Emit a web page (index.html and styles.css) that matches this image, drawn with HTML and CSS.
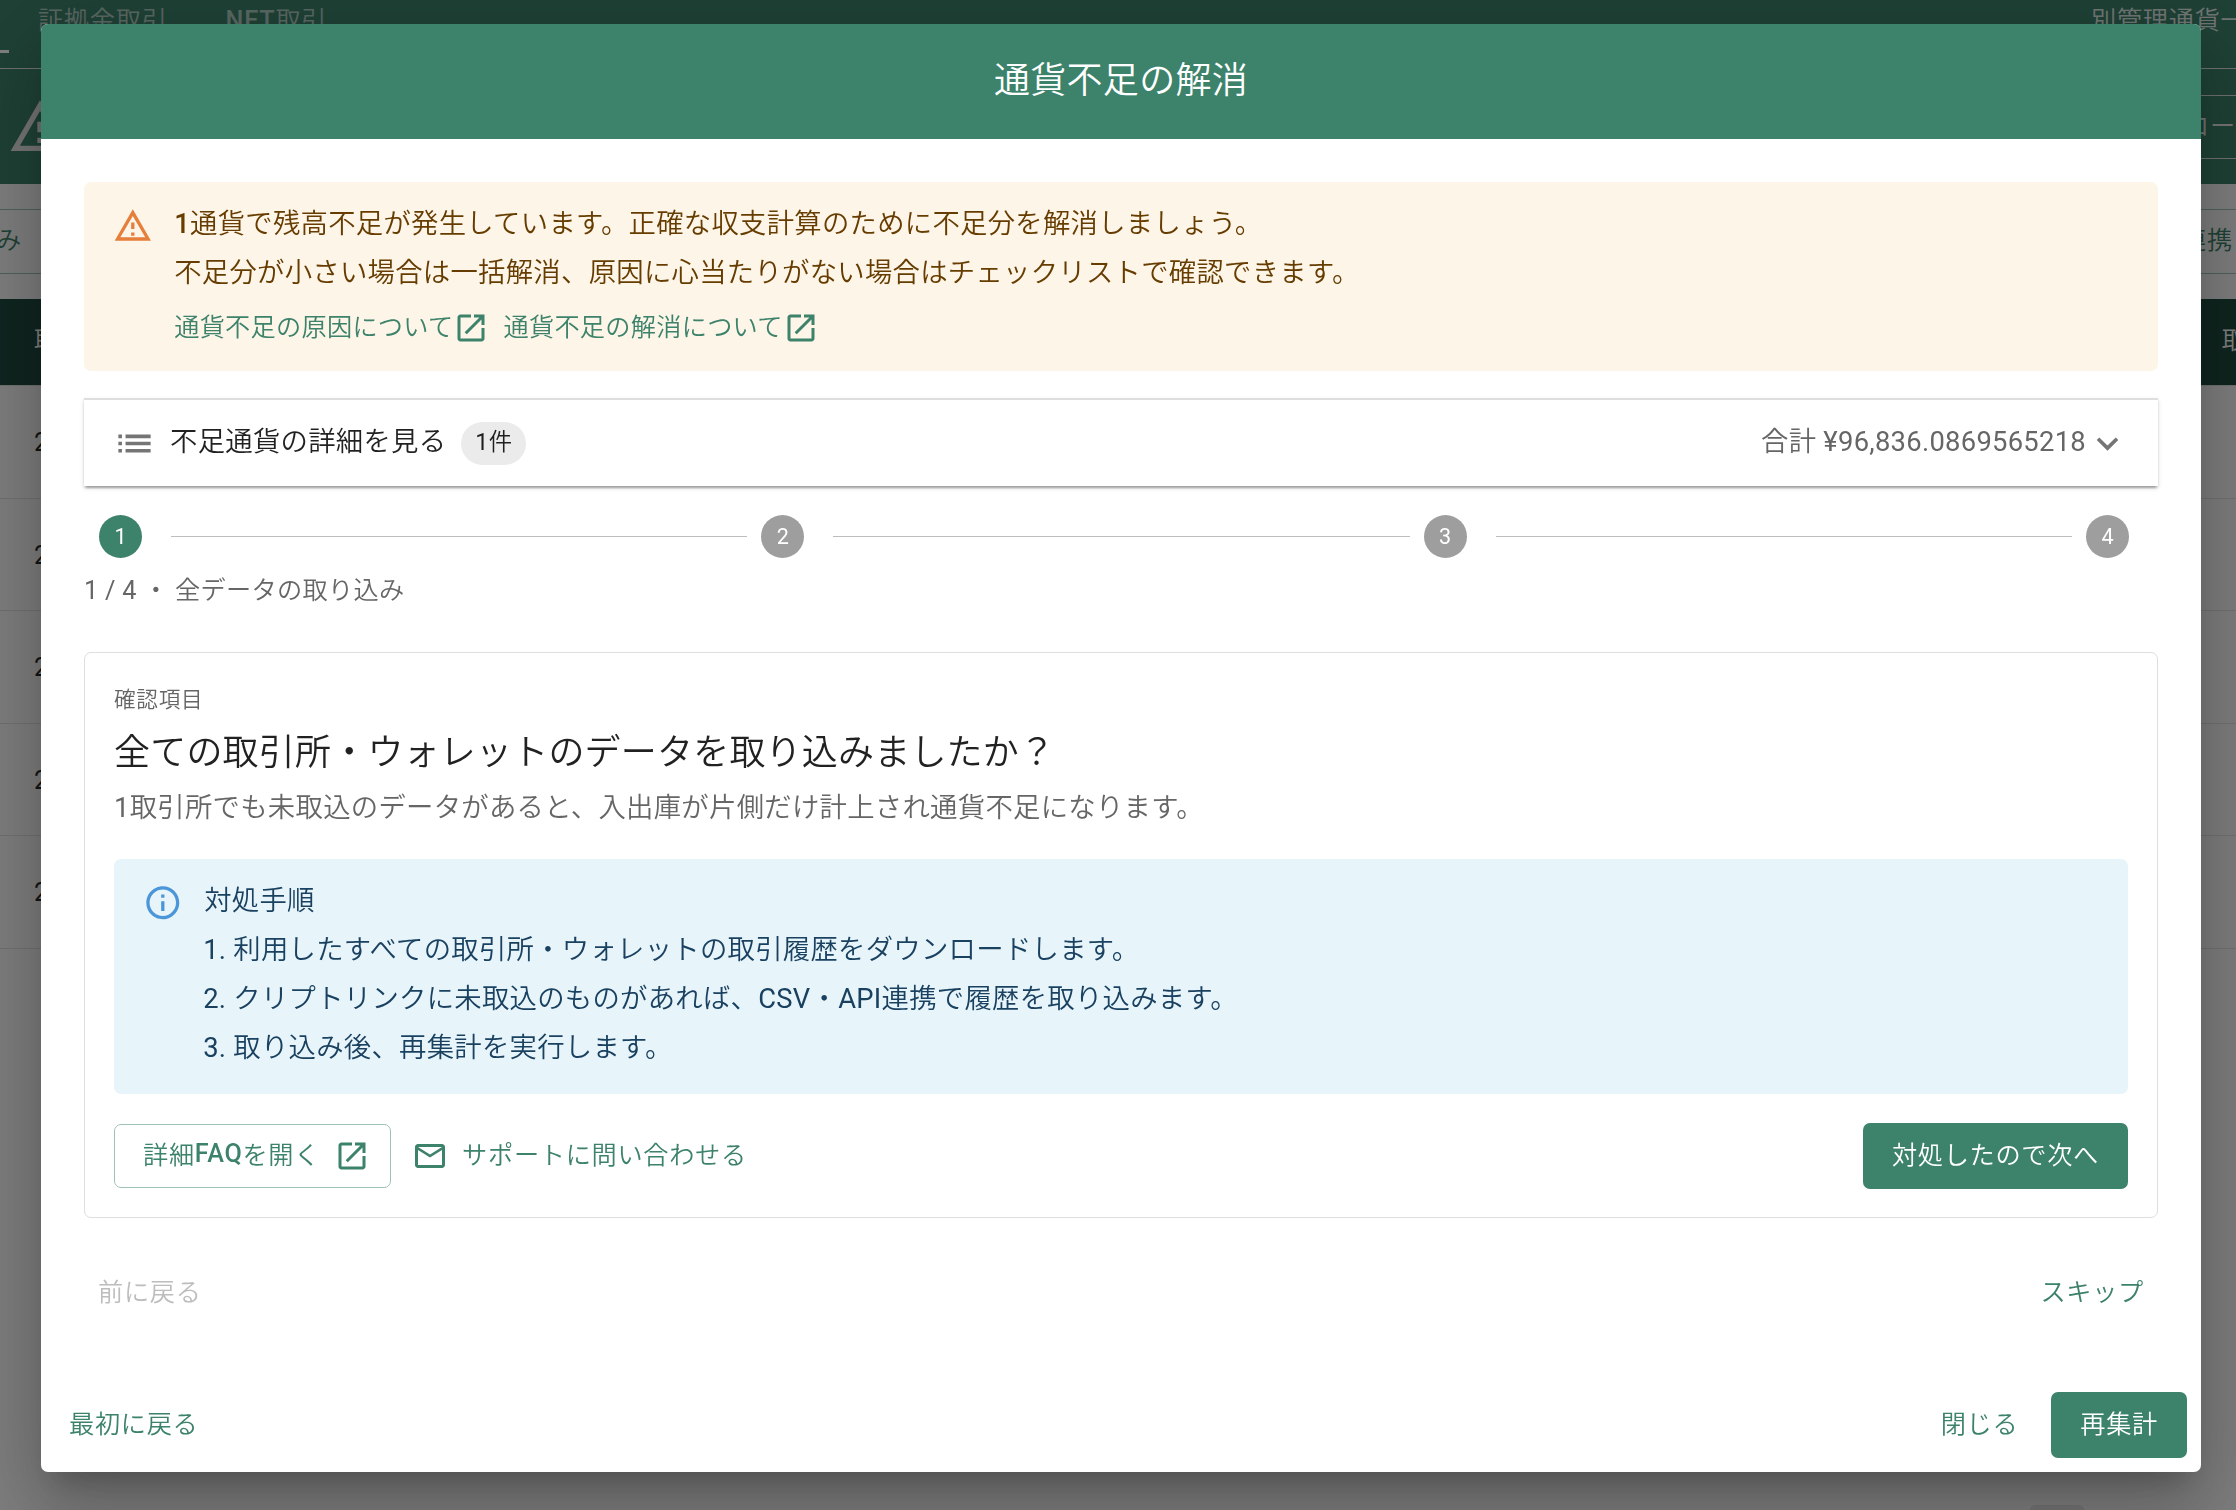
FILE: index.html
```html
<!DOCTYPE html>
<html lang="ja">
<head>
    <meta charset="UTF-8">
    <meta name="viewport" content="width=device-width, initial-scale=1.0">
    <title>通貨不足の解消</title>
    <link rel="stylesheet" href="styles.css">
</head>
<body>
    <!-- icons -->
    <svg class="sprite">
        <symbol id="icon-open" viewBox="0 0 24 24"><path d="M19 19H5V5h7V3H5c-1.11 0-2 .9-2 2v14c0 1.1.89 2 2 2h14c1.1 0 2-.9 2-2v-7h-2zM14 3v2h3.59l-9.83 9.83 1.41 1.41L19 6.41V10h2V3z"/></symbol>
        <symbol id="icon-warning" viewBox="0 0 24 24"><path d="M12 5.99L19.53 19H4.47L12 5.99M12 2L1 21h22L12 2zm1 14h-2v2h2v-2zm0-6h-2v4h2v-4z"/></symbol>
    </svg>

    <!-- page behind the dialog -->
    <div class="page">
        <nav class="tabs">
            <span class="tab-indicator"></span>
            <span class="tab tab-margin">証拠金取引</span>
            <span class="tab"><b>NET</b>取引</span>
            <span class="tab tab-right">別管理通貨一</span>
        </nav>
        <div class="banner">
            <svg class="banner-icon"><use href="#icon-warning"/></svg>
            <span class="banner-btn">ロー</span>
        </div>
        <div class="toolbar">
            <span class="tool-btn tool-left">み</span>
            <span class="tool-btn tool-right">連携</span>
        </div>
        <div class="table-head"><span>取</span><span>取</span></div>
        <div class="table-row">2</div>
        <div class="table-row">2</div>
        <div class="table-row">2</div>
        <div class="table-row">2</div>
        <div class="table-row">2</div>
        <span class="page-chip"></span>
    </div>

    <div class="backdrop">
        <div class="dialog">
            <h1 class="dialog-title">通貨不足の解消</h1>

            <div class="dialog-content">
                <div class="alert alert-warning">
                    <svg class="alert-icon"><use href="#icon-warning"/></svg>
                    <div>
                        <p><b>1</b>通貨で残高不足が発生しています。正確な収支計算のために不足分を解消しましょう。</p>
                        <p>不足分が小さい場合は一括解消、原因に心当たりがない場合はチェックリストで確認できます。</p>
                        <div class="links">
                            <a>通貨不足の原因について<svg class="icon"><use href="#icon-open"/></svg></a>
                            <a>通貨不足の解消について<svg class="icon"><use href="#icon-open"/></svg></a>
                        </div>
                    </div>
                </div>

                <div class="accordion">
                    <svg class="icon-lg" viewBox="0 0 24 24"><path d="M3 13h2v-2H3zm0 4h2v-2H3zm0-8h2V7H3zm4 4h14v-2H7zm0 4h14v-2H7zM7 7v2h14V7z"/></svg>
                    <span class="accordion-title">不足通貨の詳細を見る</span>
                    <span class="chip"><span class="num">1</span>件</span>
                    <span class="total">合計 <span class="num">¥96,836.0869565218</span></span>
                    <svg class="icon-lg" viewBox="0 0 24 24"><path d="M7.41 8.59 12 13.17l4.59-4.58L18 10l-6 6-6-6z"/></svg>
                </div>

                <div class="stepper">
                    <span class="step active">1</span>
                    <span class="connector"></span>
                    <span class="step">2</span>
                    <span class="connector"></span>
                    <span class="step">3</span>
                    <span class="connector"></span>
                    <span class="step">4</span>
                </div>
                <p class="step-label"><span class="num">1 / 4</span> ・ 全データの取り込み</p>

                <div class="card">
                    <p class="overline">確認項目</p>
                    <h2>全ての取引所・ウォレットのデータを取り込みましたか？</h2>
                    <p class="description"><span class="num">1</span>取引所でも未取込のデータがあると、入出庫が片側だけ計上され通貨不足になります。</p>

                    <div class="alert alert-info">
                        <svg class="alert-icon" viewBox="0 0 24 24"><path d="M11 7h2v2h-2zm0 4h2v6h-2zm1-9C6.48 2 2 6.48 2 12s4.48 10 10 10 10-4.48 10-10S17.52 2 12 2m0 18c-4.41 0-8-3.59-8-8s3.59-8 8-8 8 3.59 8 8-3.59 8-8 8"/></svg>
                        <div>
                            <p>対処手順</p>
                            <p class="item"><span class="num">1.</span> 利用したすべての取引所・ウォレットの取引履歴をダウンロードします。</p>
                            <p class="item"><span class="num">2.</span> クリプトリンクに未取込のものがあれば、<span class="num">CSV</span>・<span class="num">API</span>連携で履歴を取り込みます。</p>
                            <p class="item"><span class="num">3.</span> 取り込み後、再集計を実行します。</p>
                        </div>
                    </div>

                    <div class="card-actions">
                        <button class="btn btn-outlined">詳細<b>FAQ</b>を開く<svg class="icon"><use href="#icon-open"/></svg></button>
                        <button class="btn btn-mail"><svg class="icon" viewBox="0 0 24 24"><path d="M22 6c0-1.1-.9-2-2-2H4c-1.1 0-2 .9-2 2v12c0 1.1.9 2 2 2h16c1.1 0 2-.9 2-2zm-2 0-8 5-8-5zm0 12H4V8l8 5 8-5z"/></svg>サポートに問い合わせる</button>
                        <button class="btn btn-contained push">対処したので次へ</button>
                    </div>
                </div>

                <div class="step-nav">
                    <button class="btn" disabled>前に戻る</button>
                    <button class="btn">スキップ</button>
                </div>
            </div>

            <div class="dialog-actions">
                <button class="btn">最初に戻る</button>
                <button class="btn push">閉じる</button>
                <button class="btn btn-contained">再集計</button>
            </div>
        </div>
    </div>
</body>
</html>
```
FILE: styles.css
```css
* {
    box-sizing: border-box;
}
body {
    margin: 0;
    height: 1510px;
    overflow: hidden;
    font-family: Roboto, "Noto Sans CJK JP", sans-serif;
    font-size: 25.2px;
    font-weight: 350;
    color: rgba(0, 0, 0, 0.87);
}
p, h1, h2 {
    margin: 0;
    font-weight: inherit;
}
b {
    font-weight: 500;
}
.num {
    font-weight: 400;
}
svg {
    display: block;
    flex: none;
    fill: currentColor;
}
.sprite {
    position: absolute;
    width: 0;
    height: 0;
}
.icon {
    width: 36px;
    height: 36px;
}
.icon-lg {
    width: 43px;
    height: 43px;
    color: #757575;
}

/* page behind the dialog */
.page {
    position: relative;
    width: 2236px;
    height: 1510px;
    overflow: hidden;
    background-color: #fafafa;
}
.tabs {
    display: flex;
    height: 69px;
    padding-left: 38px;
    background-color: #3d826b;
    border-bottom: 1px solid #e0e0e0;
    color: rgba(255, 255, 255, 0.6);
    letter-spacing: 0.72px;
    line-height: 41px;
}
.tab-indicator {
    position: absolute;
    left: 0;
    top: 50px;
    width: 9px;
    height: 3px;
    background-color: #fff;
}
.tab-margin {
    margin-right: 58px;
}
.tab-right {
    position: absolute;
    left: 2091px;
    white-space: nowrap;
    color: rgba(255, 255, 255, 0.85);
}
.banner {
    display: flex;
    align-items: center;
    justify-content: space-between;
    height: 115px;
    padding-left: 8px;
    background-color: #3d826b;
    color: #e8e8e8;
    overflow: hidden;
}
.banner-icon {
    width: 64px;
    height: 64px;
}
.banner-btn {
    width: 55px;
    height: 64px;
    padding-left: 3px;
    border-top: 1px solid #e0e0e0;
    border-bottom: 1px solid #e0e0e0;
    line-height: 62px;
    letter-spacing: 0.72px;
    white-space: nowrap;
}
.toolbar {
    display: flex;
    align-items: center;
    justify-content: space-between;
    height: 115px;
    color: #3d826b;
}
.tool-btn {
    height: 65px;
    width: 60px;
    border-top: 1px solid #9ec1b5;
    border-bottom: 1px solid #9ec1b5;
    line-height: 62px;
    white-space: nowrap;
}
.tool-left {
    text-indent: -4px;
}
.tool-right {
    padding-left: 5px;
    letter-spacing: 0.72px;
}
.table-head {
    display: flex;
    justify-content: space-between;
    height: 87px;
    padding-left: 34px;
    margin-right: -11px;
    background-color: #1f4a3e;
    border-bottom: 1px solid #e0e0e0;
    color: #fff;
    line-height: 84px;
}
.table-row {
    height: 112.6px;
    padding-left: 34px;
    border-bottom: 1px solid #e0e0e0;
    font-weight: 400;
    line-height: 113px;
}
.page-chip {
    position: absolute;
    left: 2029px;
    top: 1505px;
    width: 56px;
    height: 20px;
    border-radius: 7px;
    background-color: #e6e6e6;
}

/* dialog */
.backdrop {
    position: fixed;
    inset: 0;
    padding: 24px 35px 38px 41px;
    background-color: rgba(0, 0, 0, 0.5);
}
.dialog {
    display: flex;
    flex-direction: column;
    height: 1448px;
    border-radius: 7px;
    overflow: hidden;
    background-color: #fff;
    box-shadow: 0 20px 27px -13px rgba(0, 0, 0, 0.2), 0 43px 68px 5px rgba(0, 0, 0, 0.14), 0 16px 83px 14px rgba(0, 0, 0, 0.12);
}
.dialog-title {
    height: 115px;
    background-color: #3d826b;
    color: #fff;
    font-size: 36px;
    letter-spacing: 0.27px;
    line-height: 114px;
    text-align: center;
}
.dialog-content {
    flex: 1;
    padding: 43px;
}

/* alerts */
.alert {
    display: flex;
    gap: 21.6px;
    padding: 18px 29px 14px;
    border-radius: 7px;
    font-size: 27.36px;
    letter-spacing: 0.27px;
    line-height: 49px;
}
.alert-icon {
    width: 39.6px;
    height: 39.6px;
    margin-top: 6px;
}
.alert-warning {
    height: 189px;
    background-color: #fdf5e8;
    color: #663c00;
}
.alert-warning .alert-icon {
    color: #e57f3b;
}
.alert-info {
    height: 235px;
    margin-top: 27px;
    background-color: #e7f5fb;
    color: #1a4160;
}
.alert-info .alert-icon {
    color: #4a96d9;
}
.item {
    margin-left: -1px;
}
.links {
    display: flex;
    gap: 14px;
    margin-top: 12px;
    color: #3d826b;
    font-size: 25.2px;
    letter-spacing: 0.27px;
    line-height: 36px;
}
.links a {
    display: flex;
}

/* deficit details */
.accordion {
    display: flex;
    align-items: center;
    height: 88px;
    margin-top: 27px;
    padding: 0 29px;
    border-top: 2px solid #dedede;
    font-size: 27.36px;
    letter-spacing: 0.28px;
    line-height: 40px;
    box-shadow: 0 4px 2px -2px rgba(0, 0, 0, 0.2), 0 2px 2px 0 rgba(0, 0, 0, 0.14), 0 2px 5px 0 rgba(0, 0, 0, 0.12);
}
.accordion-title {
    margin: 0 15px 2px 14px;
}
.chip {
    width: 65px;
    height: 43px;
    border-radius: 22px;
    background-color: #ebebeb;
    font-size: 23.4px;
    line-height: 41px;
    text-align: center;
}
.total {
    margin: 0 0 2px auto;
    color: #666;
}

/* stepper */
.stepper {
    display: flex;
    align-items: center;
    height: 43px;
    margin-top: 29px;
    padding: 0 29px 0 15px;
}
.step {
    width: 43px;
    height: 43px;
    border-radius: 50%;
    background-color: #9e9e9e;
    color: #fff;
    font-size: 21.6px;
    font-weight: 400;
    line-height: 43px;
    text-align: center;
}
.step.active {
    background-color: #3d826b;
}
.connector {
    flex: 1;
    height: 1px;
    margin: 0 14px 0 29px;
    background-color: #bdbdbd;
}
.step-label {
    margin-top: 15px;
    color: #666;
    letter-spacing: 0.3px;
    line-height: 36px;
}

/* check item card */
.card {
    height: 566px;
    margin-top: 43px;
    padding: 29px;
    border: 1px solid #dedede;
    border-radius: 7px;
}
.overline {
    color: #666;
    font-size: 21.6px;
    letter-spacing: 0.72px;
    line-height: 36px;
}
.card h2 {
    margin-top: 6px;
    font-size: 36px;
    letter-spacing: 0.2px;
    line-height: 58px;
}
.description {
    margin-top: 3px;
    color: #666;
    font-size: 27.36px;
    letter-spacing: 0.28px;
    line-height: 47px;
}
.card-actions {
    display: flex;
    align-items: center;
    margin-top: 29px;
}

/* buttons */
.btn {
    display: flex;
    align-items: center;
    height: 66px;
    padding: 0 14px 6px;
    border: none;
    border-radius: 7px;
    background: none;
    color: #3d826b;
    font: inherit;
    letter-spacing: 0.7px;
    cursor: pointer;
}
.btn:disabled {
    color: #bdbdbd;
}
.btn-contained {
    padding: 0 29px 6px;
    background-color: #3d826b;
    color: #fff;
}
.btn-outlined {
    height: 64px;
    padding: 0 20px 6px 28px;
    border: 1px solid #9ec1b5;
}
.btn .icon {
    position: relative;
    top: 3px;
}
.btn-outlined .icon {
    margin-left: 14px;
}
.btn-mail {
    padding: 0 21px 6px;
}
.btn-mail .icon {
    margin-right: 14px;
}
.push {
    margin-left: auto;
}
.step-nav {
    display: flex;
    justify-content: space-between;
    margin-top: 42px;
}
.dialog-actions {
    display: flex;
    align-items: center;
    gap: 19px;
    padding: 14px;
}
```
